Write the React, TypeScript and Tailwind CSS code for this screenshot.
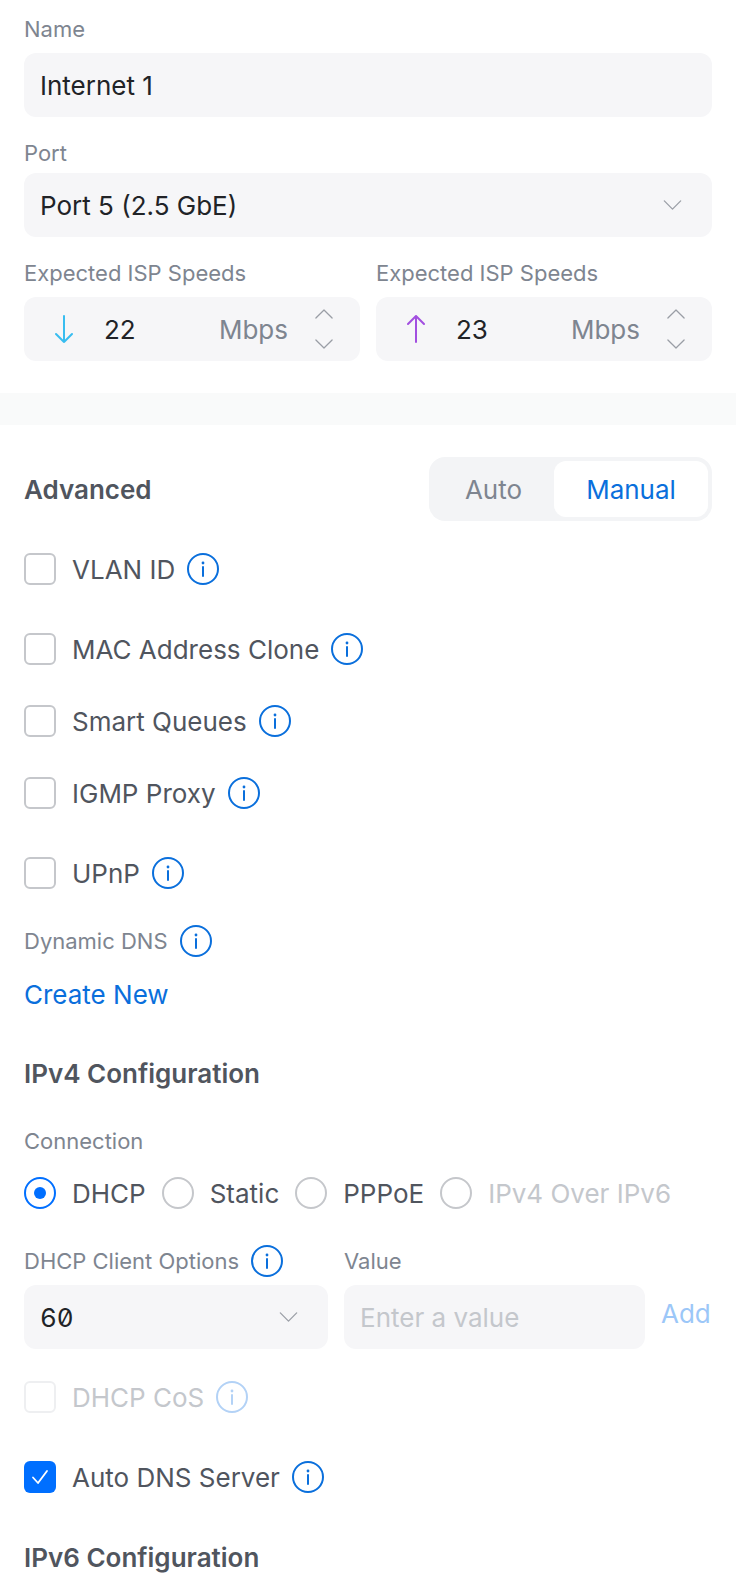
import type { ReactNode } from "react";

const InfoIcon = ({ faded = false }: { faded?: boolean }) => (
  <svg
    aria-hidden="true"
    className={`h-8 w-8 shrink-0 ${faded ? "text-[#b3d2f6]" : "text-[#0a6fdc]"}`}
    fill="none"
    viewBox="0 0 32 32"
  >
    <circle cx="16" cy="16" r="15" stroke="currentColor" strokeWidth="2" />
    <path d="M16 14v9" stroke="currentColor" strokeLinecap="round" strokeWidth="2" />
    <circle cx="16" cy="10" r="1.4" fill="currentColor" />
  </svg>
);

const Chevron = ({ up = false, className = "" }: { up?: boolean; className?: string }) => (
  <svg aria-hidden="true" className={className} fill="none" viewBox="0 0 20 11">
    <path
      d={up ? "M1 10 10 1l9 9" : "M1 1l9 9 9-9"}
      stroke="currentColor"
      strokeLinecap="round"
      strokeLinejoin="round"
      strokeWidth="1.4"
    />
  </svg>
);

const Label = ({ children, className = "" }: { children: ReactNode; className?: string }) => (
  <div className={`flex h-7 items-center text-[22px] text-[#7e8590] ${className}`}>{children}</div>
);

const Checkbox = ({
  label,
  className = "",
  disabled = false,
  checked = false,
}: {
  label: string;
  className?: string;
  disabled?: boolean;
  checked?: boolean;
}) => (
  <div className={`flex h-8 items-center ${className}`}>
    {checked ? (
      <span className="flex h-8 w-8 items-center justify-center rounded-md bg-[#006fff]">
        <svg aria-hidden="true" className="h-5 w-5" fill="none" viewBox="0 0 20 20">
          <path
            d="m3 10.5 5 5.500 9-12"
            stroke="white"
            strokeLinecap="round"
            strokeLinejoin="round"
            strokeWidth="1.8"
          />
        </svg>
      </span>
    ) : (
      <span
        className={`h-8 w-8 rounded-md border-2 ${disabled ? "border-[#eeeff1]" : "border-[#c5c7cb]"}`}
      />
    )}
    <span className={`ml-4 text-[26px] ${disabled ? "text-[#c4c7cc]" : "text-[#50555e]"}`}>
      {label}
    </span>
    <span className="ml-3 flex">
      <InfoIcon faded={disabled} />
    </span>
  </div>
);

const Radio = ({
  label,
  selected = false,
  disabled = false,
}: {
  label: string;
  selected?: boolean;
  disabled?: boolean;
}) => (
  <div className="flex h-8 items-center">
    {selected ? (
      <span className="flex h-8 w-8 items-center justify-center rounded-full border-2 border-[#006fff]">
        <span className="h-3 w-3 rounded-full bg-[#006fff]" />
      </span>
    ) : (
      <span className="h-8 w-8 rounded-full border-2 border-[#c5c7cb]" />
    )}
    <span className={`ml-4 text-[26px] ${disabled ? "text-[#c4c7cc]" : "text-[#50555e]"}`}>
      {label}
    </span>
  </div>
);

const SpeedInput = ({ value, color, up }: { value: string; color: string; up: boolean }) => (
  <div className="flex min-w-0 flex-1 flex-col">
    <Label>Expected ISP Speeds</Label>
    <div className="mt-[10px] flex h-16 items-center rounded-xl bg-[#f6f6f8] pl-[31px] pr-[27px]">
      <svg aria-hidden="true" className={`h-7 w-[18px] ${color}`} fill="none" viewBox="0 0 18 28">
        <path
          d={up ? "M9 27V1M1 9l8-8 8 8" : "M9 1v26M1 19l8 8 8-8"}
          stroke="currentColor"
          strokeLinecap="round"
          strokeLinejoin="round"
          strokeWidth="2"
        />
      </svg>
      <span className="ml-[31px] text-[26px] text-[#212327]">{value}</span>
      <span className="ml-auto text-[26px] text-[#7e8590]">Mbps</span>
      <div className="ml-[27px] flex flex-col gap-[20px] text-[#9a9ea6]">
        <Chevron className="h-[10px] w-[18px]" up />
        <Chevron className="h-[10px] w-[18px]" />
      </div>
    </div>
  </div>
);

const App = () => {
  return (
    <div className="h-[1579px] overflow-hidden bg-white font-['Inter',sans-serif]">
      <div className="px-6 pt-[15px]">
        <Label>Name</Label>
        <div className="mt-[10px] flex h-16 items-center rounded-xl bg-[#f6f6f8] px-4 text-[26px] text-[#212327]">
          Internet 1
        </div>
        <Label className="mt-[22px]">Port</Label>
        <div className="mt-[6px] flex h-16 items-center justify-between rounded-xl bg-[#f6f6f8] px-4 text-[26px] text-[#212327]">
          Port 5 (2.5 GbE)
          <Chevron className="mr-[14px] h-[10px] w-[19px] text-[#9a9ea6]" />
        </div>
        <div className="mt-[22px] flex gap-4">
          <SpeedInput color="text-[#38bdf0]" up={false} value="22" />
          <SpeedInput color="text-[#a24fe0]" up value="23" />
        </div>
      </div>

      <div className="mt-8 h-8 bg-[#f9fafa]" />

      <div className="px-6">
        <div className="mt-8 flex items-center justify-between">
          <h2 className="text-[26px] font-semibold text-[#50555e]">Advanced</h2>
          <div className="flex h-16 w-[283px] rounded-2xl bg-[#f3f4f6] p-1">
            <span className="flex w-[121px] items-center justify-center text-[26px] text-[#7e8590]">
              Auto
            </span>
            <span className="flex flex-1 items-center justify-center rounded-xl bg-white text-[26px] text-[#0a6fdc]">
              Manual
            </span>
          </div>
        </div>

        <Checkbox className="mt-8" label="VLAN ID" />
        <Checkbox className="mt-12" label="MAC Address Clone" />
        <Checkbox className="mt-10" label="Smart Queues" />
        <Checkbox className="mt-10" label="IGMP Proxy" />
        <Checkbox className="mt-12" label="UPnP" />

        <Label className="mt-[38px] gap-3">
          Dynamic DNS
          <InfoIcon />
        </Label>
        <div className="mt-[26px] text-[26px] leading-7 text-[#0a6fdc]">Create New</div>

        <h2 className="mt-[51px] text-[26px] font-semibold leading-7 text-[#50555e]">
          IPv4 Configuration
        </h2>
        <Label className="mt-[39px]">Connection</Label>

        <div className="mt-[22px] flex gap-4">
          <Radio label="DHCP" selected />
          <Radio label="Static" />
          <Radio label="PPPoE" />
          <Radio disabled label="IPv4 Over IPv6" />
        </div>

        <div className="mt-[36px] flex h-8 items-center text-[22px] text-[#7e8590]">
          <span className="flex w-[320px] items-center gap-3">
            DHCP Client Options
            <InfoIcon />
          </span>
          <span>Value</span>
        </div>
        <div className="mt-2 flex items-center">
          <div className="flex h-16 w-[304px] items-center justify-between rounded-xl bg-[#f6f6f8] px-4 text-[26px] text-[#212327]">
            <span className="[font-feature-settings:'zero','tnum']">60</span>
            <Chevron className="mr-[14px] h-[10px] w-[19px] text-[#9a9ea6]" />
          </div>
          <div className="ml-4 flex h-16 w-[301px] items-center rounded-xl bg-[#f6f6f8] px-4 text-[26px] text-[#c4c7cc]">
            Enter a value
          </div>
          <span className="mb-2 ml-4 text-[26px] text-[#9cc7f8]">Add</span>
        </div>

        <Checkbox className="mt-8" disabled label="DHCP CoS" />
        <Checkbox checked className="mt-12" label="Auto DNS Server" />

        <h2 className="mt-[51px] text-[26px] font-semibold leading-7 text-[#50555e]">
          IPv6 Configuration
        </h2>
      </div>
    </div>
  );
};

export default App;
